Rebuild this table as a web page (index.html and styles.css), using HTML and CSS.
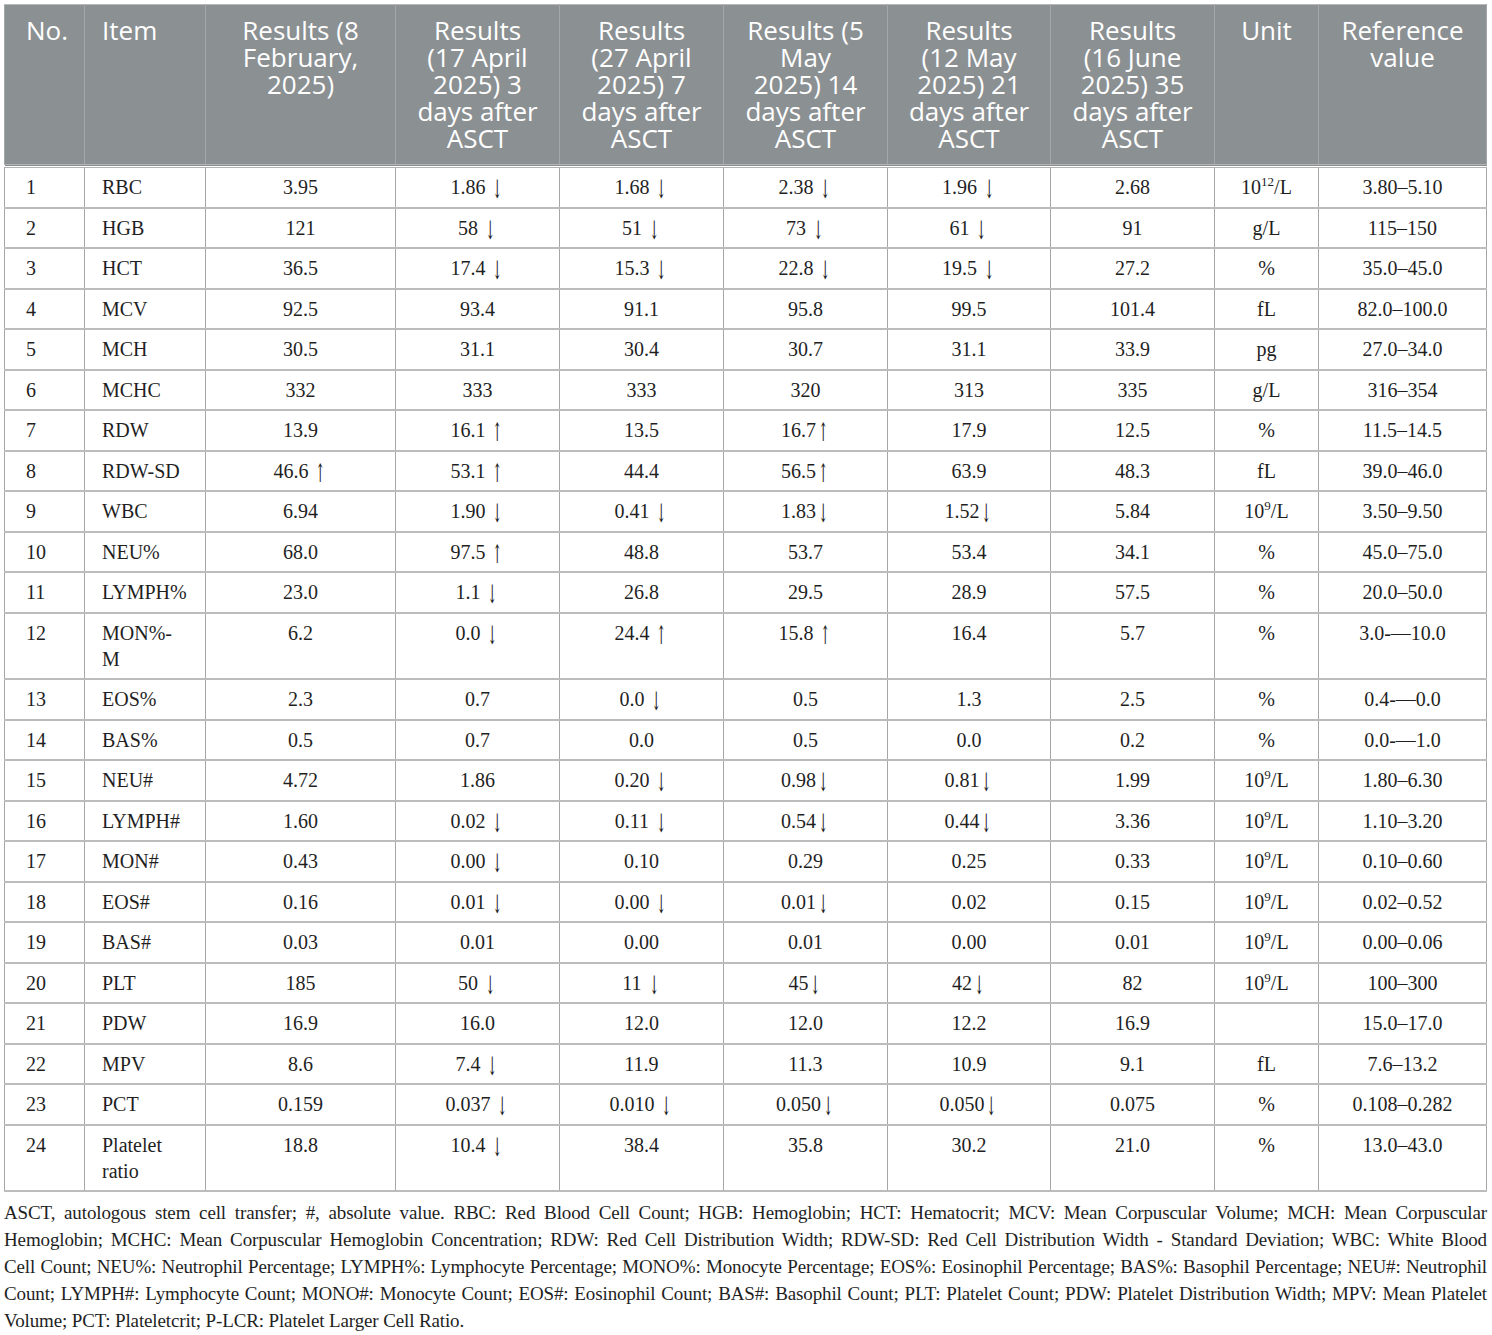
FILE: index.html
```html
<!DOCTYPE html>
<html lang="en">
<head>
<meta charset="utf-8">
<title>Blood test results</title>
<link rel="stylesheet" href="styles.css">
</head>
<body>
<div class="page">
<table class="results">
  <colgroup>
    <col class="c-no"><col class="c-item"><col class="c-r1"><col class="c-r"><col class="c-r"><col class="c-r"><col class="c-r5"><col class="c-r"><col class="c-unit"><col class="c-ref">
  </colgroup>
  <thead>
    <tr>
      <th class="left first">No.</th>
      <th class="left second">Item</th>
      <th>Results (8<br>February,<br>2025)</th>
      <th>Results<br>(17 April<br>2025) 3<br>days after<br>ASCT</th>
      <th>Results<br>(27 April<br>2025) 7<br>days after<br>ASCT</th>
      <th>Results (5<br>May<br>2025) 14<br>days after<br>ASCT</th>
      <th>Results<br>(12 May<br>2025) 21<br>days after<br>ASCT</th>
      <th>Results<br>(16 June<br>2025) 35<br>days after<br>ASCT</th>
      <th>Unit</th>
      <th>Reference<br>value</th>
    </tr>
  </thead>
  <tbody>
    <tr><td class="first">1</td><td class="second">RBC</td><td>3.95</td><td>1.86 <span class="arr">↓</span></td><td>1.68 <span class="arr">↓</span></td><td>2.38 <span class="arr">↓</span></td><td>1.96 <span class="arr">↓</span></td><td>2.68</td><td>10<sup>12</sup>/L</td><td>3.80–5.10</td></tr>
    <tr><td class="first">2</td><td class="second">HGB</td><td>121</td><td>58 <span class="arr">↓</span></td><td>51 <span class="arr">↓</span></td><td>73 <span class="arr">↓</span></td><td>61 <span class="arr">↓</span></td><td>91</td><td>g/L</td><td>115–150</td></tr>
    <tr><td class="first">3</td><td class="second">HCT</td><td>36.5</td><td>17.4 <span class="arr">↓</span></td><td>15.3 <span class="arr">↓</span></td><td>22.8 <span class="arr">↓</span></td><td>19.5 <span class="arr">↓</span></td><td>27.2</td><td>%</td><td>35.0–45.0</td></tr>
    <tr><td class="first">4</td><td class="second">MCV</td><td>92.5</td><td>93.4</td><td>91.1</td><td>95.8</td><td>99.5</td><td>101.4</td><td>fL</td><td>82.0–100.0</td></tr>
    <tr><td class="first">5</td><td class="second">MCH</td><td>30.5</td><td>31.1</td><td>30.4</td><td>30.7</td><td>31.1</td><td>33.9</td><td>pg</td><td>27.0–34.0</td></tr>
    <tr><td class="first">6</td><td class="second">MCHC</td><td>332</td><td>333</td><td>333</td><td>320</td><td>313</td><td>335</td><td>g/L</td><td>316–354</td></tr>
    <tr><td class="first">7</td><td class="second">RDW</td><td>13.9</td><td>16.1 <span class="arr">↑</span></td><td>13.5</td><td>16.7<span class="arr">↑</span></td><td>17.9</td><td>12.5</td><td>%</td><td>11.5–14.5</td></tr>
    <tr><td class="first">8</td><td class="second">RDW-SD</td><td>46.6 <span class="arr">↑</span></td><td>53.1 <span class="arr">↑</span></td><td>44.4</td><td>56.5<span class="arr">↑</span></td><td>63.9</td><td>48.3</td><td>fL</td><td>39.0–46.0</td></tr>
    <tr><td class="first">9</td><td class="second">WBC</td><td>6.94</td><td>1.90 <span class="arr">↓</span></td><td>0.41 <span class="arr">↓</span></td><td>1.83<span class="arr">↓</span></td><td>1.52<span class="arr">↓</span></td><td>5.84</td><td>10<sup>9</sup>/L</td><td>3.50–9.50</td></tr>
    <tr><td class="first">10</td><td class="second">NEU%</td><td>68.0</td><td>97.5 <span class="arr">↑</span></td><td>48.8</td><td>53.7</td><td>53.4</td><td>34.1</td><td>%</td><td>45.0–75.0</td></tr>
    <tr><td class="first">11</td><td class="second">LYMPH%</td><td>23.0</td><td>1.1 <span class="arr">↓</span></td><td>26.8</td><td>29.5</td><td>28.9</td><td>57.5</td><td>%</td><td>20.0–50.0</td></tr>
    <tr><td class="first">12</td><td class="second">MON%-<br>M</td><td>6.2</td><td>0.0 <span class="arr">↓</span></td><td>24.4 <span class="arr">↑</span></td><td>15.8 <span class="arr">↑</span></td><td>16.4</td><td>5.7</td><td>%</td><td>3.0-—10.0</td></tr>
    <tr><td class="first">13</td><td class="second">EOS%</td><td>2.3</td><td>0.7</td><td>0.0 <span class="arr">↓</span></td><td>0.5</td><td>1.3</td><td>2.5</td><td>%</td><td>0.4-—0.0</td></tr>
    <tr><td class="first">14</td><td class="second">BAS%</td><td>0.5</td><td>0.7</td><td>0.0</td><td>0.5</td><td>0.0</td><td>0.2</td><td>%</td><td>0.0-—1.0</td></tr>
    <tr><td class="first">15</td><td class="second">NEU#</td><td>4.72</td><td>1.86</td><td>0.20 <span class="arr">↓</span></td><td>0.98<span class="arr">↓</span></td><td>0.81<span class="arr">↓</span></td><td>1.99</td><td>10<sup>9</sup>/L</td><td>1.80–6.30</td></tr>
    <tr><td class="first">16</td><td class="second">LYMPH#</td><td>1.60</td><td>0.02 <span class="arr">↓</span></td><td>0.11 <span class="arr">↓</span></td><td>0.54<span class="arr">↓</span></td><td>0.44<span class="arr">↓</span></td><td>3.36</td><td>10<sup>9</sup>/L</td><td>1.10–3.20</td></tr>
    <tr><td class="first">17</td><td class="second">MON#</td><td>0.43</td><td>0.00 <span class="arr">↓</span></td><td>0.10</td><td>0.29</td><td>0.25</td><td>0.33</td><td>10<sup>9</sup>/L</td><td>0.10–0.60</td></tr>
    <tr><td class="first">18</td><td class="second">EOS#</td><td>0.16</td><td>0.01 <span class="arr">↓</span></td><td>0.00 <span class="arr">↓</span></td><td>0.01<span class="arr">↓</span></td><td>0.02</td><td>0.15</td><td>10<sup>9</sup>/L</td><td>0.02–0.52</td></tr>
    <tr><td class="first">19</td><td class="second">BAS#</td><td>0.03</td><td>0.01</td><td>0.00</td><td>0.01</td><td>0.00</td><td>0.01</td><td>10<sup>9</sup>/L</td><td>0.00–0.06</td></tr>
    <tr><td class="first">20</td><td class="second">PLT</td><td>185</td><td>50 <span class="arr">↓</span></td><td>11 <span class="arr">↓</span></td><td>45<span class="arr">↓</span></td><td>42<span class="arr">↓</span></td><td>82</td><td>10<sup>9</sup>/L</td><td>100–300</td></tr>
    <tr><td class="first">21</td><td class="second">PDW</td><td>16.9</td><td>16.0</td><td>12.0</td><td>12.0</td><td>12.2</td><td>16.9</td><td></td><td>15.0–17.0</td></tr>
    <tr><td class="first">22</td><td class="second">MPV</td><td>8.6</td><td>7.4 <span class="arr">↓</span></td><td>11.9</td><td>11.3</td><td>10.9</td><td>9.1</td><td>fL</td><td>7.6–13.2</td></tr>
    <tr><td class="first">23</td><td class="second">PCT</td><td>0.159</td><td>0.037 <span class="arr">↓</span></td><td>0.010 <span class="arr">↓</span></td><td>0.050<span class="arr">↓</span></td><td>0.050<span class="arr">↓</span></td><td>0.075</td><td>%</td><td>0.108–0.282</td></tr>
    <tr><td class="first">24</td><td class="second">Platelet<br>ratio</td><td>18.8</td><td>10.4 <span class="arr">↓</span></td><td>38.4</td><td>35.8</td><td>30.2</td><td>21.0</td><td>%</td><td>13.0–43.0</td></tr>
  </tbody>
</table>
<div class="notes">
  <span class="line">ASCT, autologous stem cell transfer; #, absolute value. RBC: Red Blood Cell Count; HGB: Hemoglobin; HCT: Hematocrit; MCV: Mean Corpuscular Volume; MCH: Mean Corpuscular</span>
  <span class="line">Hemoglobin; MCHC: Mean Corpuscular Hemoglobin Concentration; RDW: Red Cell Distribution Width; RDW-SD: Red Cell Distribution Width - Standard Deviation; WBC: White Blood</span>
  <span class="line">Cell Count; NEU%: Neutrophil Percentage; LYMPH%: Lymphocyte Percentage; MONO%: Monocyte Percentage; EOS%: Eosinophil Percentage; BAS%: Basophil Percentage; NEU#: Neutrophil</span>
  <span class="line">Count; LYMPH#: Lymphocyte Count; MONO#: Monocyte Count; EOS#: Eosinophil Count; BAS#: Basophil Count; PLT: Platelet Count; PDW: Platelet Distribution Width; MPV: Mean Platelet</span>
  <span class="line last">Volume; PCT: Plateletcrit; P-LCR: Platelet Larger Cell Ratio.</span>
</div>
</div>
</body>
</html>
```

FILE: styles.css
```css
html, body {
  margin: 0;
  padding: 0;
  background: #ffffff;
}

.page {
  padding: 4px 0 0 4px;
  width: 1483px;
}

.results {
  width: 1483px;
  table-layout: fixed;
  border-collapse: collapse;
  border: 1px solid #a9a9a9;
  font-family: "Liberation Serif", "Times New Roman", serif;
  font-size: 20px;
  color: #1f1f1f;
}

.c-no { width: 80px; }
.c-item { width: 121px; }
.c-r1 { width: 190px; }
.c-r { width: 164px; }
.c-r5 { width: 163px; }
.c-unit { width: 104px; }
.c-ref { width: 168px; }

.results th {
  background: #8b9093;
  color: #ffffff;
  font-family: "Open Sans", "Noto Sans", sans-serif;
  font-weight: 400;
  font-size: 26px;
  line-height: 27px;
  text-align: center;
  vertical-align: top;
  white-space: nowrap;
  padding: 12px 4px 12px;
  border-left: 1px solid #a4a7a9;
  border-right: 1px solid #a4a7a9;
  border-top: 1px solid #b9b9b9;
  border-bottom: 4px double #b3b3b3;
}

.results td {
  text-align: center;
  vertical-align: top;
  line-height: 26px;
  padding: 6px 6px 6.5px;
  border-left: 1px solid #a6a6a6;
  border-right: 1px solid #a6a6a6;
  border-top: 2px solid #bcbcbc;
  border-bottom: 2px solid #bcbcbc;
}

.results th.left { text-align: left; }
.results .first { text-align: left; padding-left: 21px; }
.results .second { text-align: left; padding-left: 17px; padding-right: 6px; }

.results sup {
  font-size: 13px;
  line-height: 0;
  vertical-align: 8px;
}

.arr {
  display: inline-block;
  font-family: "DejaVu Serif", "DejaVu Sans", serif;
  font-variant-emoji: text;
  font-size: 17px;
  line-height: 20px;
  color: #1f1f1f;
  transform: scale(0.72, 1.5);
  transform-origin: 50% 45%;
}

.notes {
  margin-top: 7px;
  width: 1483px;
  font-family: "Liberation Serif", "Times New Roman", serif;
  font-size: 19px;
  letter-spacing: -0.13px;
  line-height: 27px;
  color: #1f1f1f;
}

.notes .line {
  display: block;
  white-space: nowrap;
  text-align: justify;
  text-align-last: justify;
}

.notes .line.last {
  text-align-last: left;
}
```
